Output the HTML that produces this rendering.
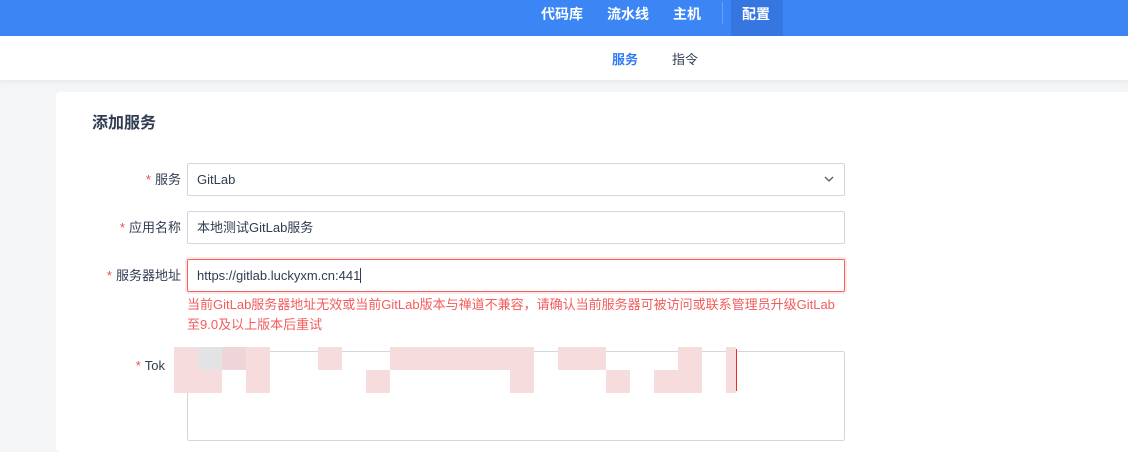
<!DOCTYPE html>
<html><head><meta charset="utf-8"><style>
*{margin:0;padding:0;box-sizing:border-box}
body{width:1128px;height:442px;overflow:hidden;background:#f4f5f7;font-family:"Liberation Sans","Noto Sans CJK SC",sans-serif;font-size:13px;color:#313c52;position:relative}
.top{position:absolute;left:0;top:0;width:1128px;height:36px;background:#3c85f5}
.top span{position:absolute;top:4px;color:#fff;font-size:14px;font-weight:bold}
.act{position:absolute;left:731px;top:0;width:52px;height:36px;background:#3576e0}
.sub{position:absolute;left:0;top:36px;width:1128px;height:44px;background:#fff;box-shadow:0 2px 4px rgba(0,0,0,.05)}
.sub span{position:absolute;top:13px;font-size:13px;font-weight:bold}
.card{position:absolute;left:56px;top:92px;width:1080px;height:360px;background:#fff;border-radius:4px}
.abs{position:absolute}
.lbl{position:absolute;right:947px;font-size:13px;color:#313c52;white-space:nowrap}
.lbl b{color:#f14b4b;font-weight:normal;margin-right:4px}
.inp{position:absolute;left:187px;width:658px;height:33px;border:1px solid #d4d6e2;border-radius:2px;padding:0 9px;line-height:31px;font-size:13px;background:#fff}
.err{position:absolute;left:187px;top:295px;width:660px;color:#f25c5c;font-size:13px;line-height:20px}
.m{position:absolute;height:23px;background:#f7dcde}
</style></head><body>
<div class="top">
<span style="left:541px">代码库</span><span style="left:607px">流水线</span><span style="left:673px">主机</span>
<div class="abs" style="left:722px;top:2px;width:1px;height:22px;background:#6aa2f8"></div>
<div class="act"></div><span style="left:742px">配置</span>
</div>
<div class="sub"><span style="left:612px;color:#2e7cf6">服务</span><span style="left:672px;color:#313c52;font-weight:normal">指令</span></div>
<div class="card"></div>
<div class="abs" style="left:92px;top:109px;font-size:16px;font-weight:bold;color:#313c52">添加服务</div>
<div class="lbl" style="top:169px"><b>*</b>服务</div>
<div class="inp" style="top:163px">GitLab<svg class="abs" style="right:10px;top:12px" width="10" height="7" viewBox="0 0 10 7"><path d="M1 1l4 4 4-4" fill="none" stroke="#555c6b" stroke-width="1.3"/></svg></div>
<div class="lbl" style="top:217px"><b>*</b>应用名称</div>
<div class="inp" style="top:211px">本地测试GitLab服务</div>
<div class="lbl" style="top:265px"><b>*</b>服务器地址</div>
<div class="inp" style="top:259px;border-color:#f36262;box-shadow:0 0 0 2px #fde8e8">https://gitlab.luckyxm.cn:441<span style="display:inline-block;width:1px;height:15px;background:#313c52;vertical-align:-3px"></span></div>
<div class="err">当前GitLab服务器地址无效或当前GitLab版本与禅道不兼容，请确认当前服务器可被访问或联系管理员升级GitLab至9.0及以上版本后重试</div>
<div class="lbl" style="top:358px;right:963px"><b>*</b>Tok</div>
<div class="inp" style="top:351px;height:90px"></div>
<div class="m" style="left:174px;top:347px;width:24px"></div>
<div class="m" style="left:198px;top:347px;width:24px;background:#e3e3e5"></div>
<div class="m" style="left:222px;top:347px;width:24px;background:#eed5d7"></div>
<div class="m" style="left:246px;top:347px;width:24px"></div>
<div class="m" style="left:318px;top:347px;width:24px"></div>
<div class="m" style="left:390px;top:347px;width:120px"></div>
<div class="m" style="left:510px;top:347px;width:24px;height:46px"></div>
<div class="m" style="left:558px;top:347px;width:48px"></div>
<div class="m" style="left:678px;top:347px;width:24px"></div>
<div class="m" style="left:726px;top:347px;width:10px;height:46px"></div>
<div class="m" style="left:174px;top:370px;width:48px"></div>
<div class="m" style="left:246px;top:370px;width:24px"></div>
<div class="m" style="left:366px;top:370px;width:24px"></div>
<div class="m" style="left:606px;top:370px;width:24px"></div>
<div class="m" style="left:654px;top:370px;width:48px"></div>
<div class="abs" style="left:736px;top:349px;width:1px;height:42px;background:#e03030"></div>
</body></html>
